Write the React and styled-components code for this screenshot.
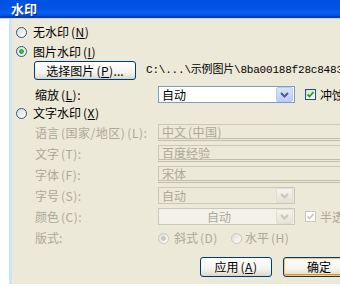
import React from 'react';
import styled, { createGlobalStyle, css } from 'styled-components';

const GlobalStyle = createGlobalStyle`
  html, body {
    margin: 0;
    padding: 0;
    background: #fff;
  }
  body {
    width: 340px;
    height: 286px;
    overflow: hidden;
    font-family: "Noto Sans CJK SC", "Noto Sans", sans-serif;
    font-size: 12px;
    line-height: 1;
  }
`;

const Window = styled.div`
  width: 340px;
  height: 286px;
  display: flex;
  flex-direction: column;
  overflow: hidden;
  background: #fff;
`;

const TitleBar = styled.div`
  flex: none;
  height: 16px;
  padding-left: 11px;
  display: flex;
  align-items: center;
  background: linear-gradient(#0050df, #0055e6 55%, #0a60f2 80%, #0050dc);
  border-bottom: 2px solid #0a3db2;
  color: #fff;
  font-weight: 700;
  font-size: 13px;
  text-shadow: 1px 1px 0 #0a2a8a;
`;

const Body = styled.div`
  flex: 1;
  display: flex;
  border-top: 1px solid #c2d3f3;
  padding-bottom: 2px;
`;

const Frame = styled.div`
  flex: none;
  width: 12px;
  background: linear-gradient(to right, #fff 9px, #cde3f8 9px);
`;

const Content = styled.div`
  flex: 1;
  display: flex;
  flex-direction: column;
  background: #ece9d8;
  padding: 3px 0 0 4px;
  overflow: hidden;
  color: #000;
`;

const Row = styled.div`
  flex: none;
  display: flex;
  align-items: center;
  height: ${(p) => p.$h || 17}px;
  margin-top: ${(p) => p.$mt || 0}px;
  padding-left: ${(p) => p.$indent || 0}px;
  white-space: nowrap;
`;

const Radio = styled.span`
  flex: none;
  box-sizing: border-box;
  width: 11px;
  height: 11px;
  border-radius: 50%;
  border: 1px solid ${(p) => (p.$disabled ? '#cac8bb' : '#2c5886')};
  background: ${(p) =>
    p.$checked
      ? `radial-gradient(circle, ${p.$disabled ? '#cac8bb' : '#5ccf5c'} 0, ${
          p.$disabled ? '#cac8bb' : '#21a121'
        } 2px, transparent 2.6px), linear-gradient(135deg, #dcdbd3, #fff)`
      : 'linear-gradient(135deg, #dcdbd3, #fff)'};
  margin-right: ${(p) => p.$gap || 6}px;
`;

const Label = styled.span`
  color: ${(p) => (p.$disabled ? '#aca899' : '#000')};
  width: ${(p) => (p.$w ? `${p.$w}px` : 'auto')};
  flex: none;
`;

// half-width brackets in the original font sit with air around them
const Paren = styled.span`
  margin-left: 2px;
  letter-spacing: 0.5px;
`;

const Key = styled.u`
  text-decoration: underline;
`;

const XpButton = styled.button`
  flex: none;
  box-sizing: border-box;
  width: ${(p) => p.$w}px;
  height: ${(p) => p.$h || 20}px;
  padding: 0;
  margin-right: ${(p) => p.$mr || 0}px;
  border: 1px solid #003c74;
  border-radius: 3px;
  background: linear-gradient(#fff, #f4f3ee 60%, #e3e0d5 90%, #d6d0c5);
  font: inherit;
  color: #000;
  ${(p) =>
    p.$default &&
    css`
      box-shadow: inset 0 0 0 1px #ffc46e, inset 0 -1px 0 1px #e59700;
    `}
`;

const PathText = styled.span`
  margin-left: 10px;
  font-family: "Liberation Mono", "Noto Sans CJK SC", monospace;
  font-size: 11px;
  letter-spacing: -0.2px;
`;

const SelectBox = styled.div`
  flex: none;
  box-sizing: border-box;
  width: 137px;
  height: 17px;
  display: flex;
  align-items: center;
  border: 1px solid ${(p) => (p.$disabled ? '#c9c7ba' : '#7f9db9')};
  background: ${(p) => (p.$disabled ? (p.$light ? '#f3f1ea' : '#ece9d8') : '#fff')};
  color: ${(p) => (p.$disabled ? '#aca899' : '#000')};
  padding: 0 1px 0 3px;
`;

const SelectValue = styled.span`
  flex: 1;
  text-align: ${(p) => (p.$center ? 'center' : 'left')};
`;

const ArrowBox = styled.span`
  flex: none;
  width: 15px;
  height: 13px;
  border-radius: 2px;
  display: flex;
  align-items: center;
  justify-content: center;
  background: ${(p) =>
    p.$disabled ? 'linear-gradient(#f4f3ee, #e6e3d6)' : 'linear-gradient(#d8e3fc, #bccff8)'};
  border: 1px solid ${(p) => (p.$disabled ? '#e2dfd2' : '#b9cbf3')};
`;

const TextField = styled.div`
  flex: none;
  box-sizing: border-box;
  width: 200px;
  height: 17px;
  display: flex;
  align-items: center;
  padding-left: 3px;
  border: 1px solid #c9c7ba;
  border-bottom: 3px double #c0bdad;
  color: #aca899;
  background: #ece9d8;
`;

const Check = styled.span`
  flex: none;
  box-sizing: border-box;
  width: 11px;
  height: 11px;
  margin: 0 4px 0 10px;
  display: flex;
  align-items: center;
  justify-content: center;
  border: 1px solid ${(p) => (p.$disabled ? '#cac8bb' : '#1c5180')};
  background: ${(p) => (p.$disabled ? '#fff' : 'linear-gradient(135deg, #dcdbd3, #fff)')};
`;

const ButtonBar = styled.div`
  flex: none;
  display: flex;
  margin-top: 10px;
  padding-left: 184px;
`;

const Chevron = ({ disabled }) => (
  <svg width="9" height="6" viewBox="0 0 9 6">
    <polyline
      points="1,1 4.5,4.5 8,1"
      fill="none"
      stroke={disabled ? '#c9c7ba' : '#4d6185'}
      strokeWidth="2"
    />
  </svg>
);

const Tick = ({ disabled }) => (
  <svg width="7" height="7" viewBox="0 0 7 7">
    <polyline
      points="0.5,3.5 2.5,5.5 6.5,1"
      fill="none"
      stroke={disabled ? '#cac8bb' : '#21a121'}
      strokeWidth="1.8"
    />
  </svg>
);

const Select = ({ value, disabled, center, light }) => (
  <SelectBox $disabled={disabled} $light={light}>
    <SelectValue $center={center}>{value}</SelectValue>
    <ArrowBox $disabled={disabled}>
      <Chevron disabled={disabled} />
    </ArrowBox>
  </SelectBox>
);

const Acc = ({ k, under = true }) => (
  <Paren>({under ? <Key>{k}</Key> : k})</Paren>
);

export default function App() {
  return (
    <Window>
      <GlobalStyle />
      <TitleBar>水印</TitleBar>
      <Body>
        <Frame />
        <Content>
          <Row $h={20}>
            <Radio />
            <Label>无水印<Acc k="N" /></Label>
          </Row>
          <Row $h={19}>
            <Radio $checked />
            <Label>图片水印<Acc k="I" /></Label>
          </Row>
          <Row $h={19} $indent={18}>
            <XpButton $w={102} $h={19}>选择图片<Acc k="P" />...</XpButton>
            <PathText>C:\...\示例图片\8ba00188f28c8483:</PathText>
          </Row>
          <Row $h={19} $mt={5} $indent={19}>
            <Label $w={123}>缩放<Acc k="L" />:</Label>
            <Select value="自动" />
            <Check>
              <Tick />
            </Check>
            <Label>冲蚀</Label>
          </Row>
          <Row $h={18}>
            <Radio />
            <Label>文字水印<Acc k="X" /></Label>
          </Row>
          <Row $mt={2} $indent={19}>
            <Label $w={123} $disabled>语言<Paren>(国家/地区)</Paren><Acc k="L" under={false} />:</Label>
            <TextField>中文<Paren>(中国)</Paren></TextField>
          </Row>
          <Row $mt={4} $indent={19}>
            <Label $w={123} $disabled>文字<Acc k="T" under={false} />:</Label>
            <TextField>百度经验</TextField>
          </Row>
          <Row $mt={4} $indent={19}>
            <Label $w={123} $disabled>字体<Acc k="F" under={false} />:</Label>
            <TextField>宋体</TextField>
          </Row>
          <Row $mt={4} $indent={19}>
            <Label $w={123} $disabled>字号<Acc k="S" under={false} />:</Label>
            <Select value="自动" disabled />
          </Row>
          <Row $mt={4} $indent={19}>
            <Label $w={123} $disabled>颜色<Acc k="C" under={false} />:</Label>
            <Select value="自动" disabled center light />
            <Check $disabled>
              <Tick disabled />
            </Check>
            <Label $disabled>半透明</Label>
          </Row>
          <Row $h={18} $mt={4} $indent={19}>
            <Label $w={123} $disabled>版式:</Label>
            <Radio $checked $disabled $gap={5} />
            <Label $disabled $w={57}>斜式<Acc k="D" under={false} /></Label>
            <Radio $disabled $gap={3} />
            <Label $disabled>水平<Acc k="H" under={false} /></Label>
          </Row>
          <ButtonBar>
            <XpButton $w={72} $mr={11}>应用<Acc k="A" /></XpButton>
            <XpButton $w={72} $default>确定</XpButton>
          </ButtonBar>
        </Content>
      </Body>
    </Window>
  );
}
